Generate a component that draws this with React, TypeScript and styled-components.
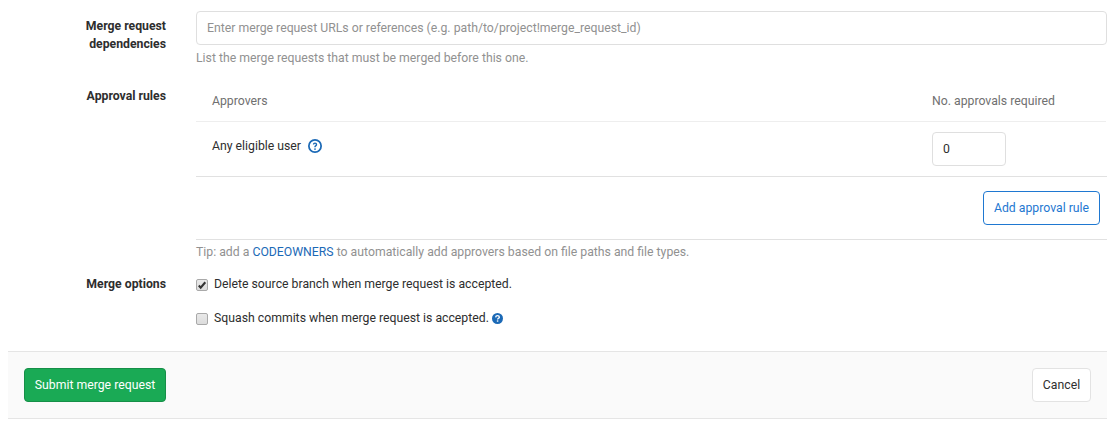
import React from 'react';
import styled, { createGlobalStyle } from 'styled-components';

const GlobalStyle = createGlobalStyle`
  * { box-sizing: border-box; }
  body {
    margin: 0;
    background: #fff;
    color: #2e2e2e;
    font: 12.25px/18px Roboto, "Liberation Sans", sans-serif;
  }
`;

const Page = styled.form`
  width: 1099px;
  margin: 0 0 0 8px;
  padding-top: 11px;
  white-space: nowrap;
`;

const FormRow = styled.div<{ $height: number }>`
  display: grid;
  grid-template-columns: 158px 911px;
  column-gap: 30px;
  height: ${(p) => p.$height}px;
`;

const Label = styled.div<{ $top?: number }>`
  padding-top: ${(p) => p.$top ?? 0}px;
  text-align: right;
  font-weight: 700;
`;

const TextInput = styled.input<{ $width?: string }>`
  display: block;
  width: ${(p) => p.$width ?? '100%'};
  height: 34px;
  padding: 0 10px;
  border: 1px solid #dfdfdf;
  border-radius: 4px;
  background: #fff;
  color: #2e2e2e;
  font: inherit;
  outline: 0;
  &::placeholder { color: #919191; opacity: 1; }
`;

const Help = styled.div<{ $top: number }>`
  margin-top: ${(p) => p.$top}px;
  color: #919191;
`;

const Link = styled.a`
  color: #1b69b6;
  text-decoration: none;
`;

const RuleHeader = styled.div`
  display: grid;
  grid-template-columns: 720px 1fr;
  align-items: center;
  width: 910px;
  height: 42px;
  padding: 0 0 0 16px;
  border-bottom: 1px solid #eee;
  color: #707070;
`;

const RuleRow = styled.div`
  display: grid;
  grid-template-columns: 720px 1fr;
  align-items: start;
  height: 55px;
  padding: 10px 0 0 16px;
  border-bottom: 1px solid #e1e1e1;
`;

const RuleName = styled.div`
  display: flex;
  align-items: center;
  gap: 7px;
  padding-top: 5px;
  svg { display: block; }
`;

const RuleFooter = styled.div`
  display: flex;
  justify-content: flex-end;
  height: 63px;
  padding: 14px 7px 0 0;
  border-bottom: 1px solid #e1e1e1;
`;

const Button = styled.button<{ $kind: 'outline' | 'success' | 'plain'; $width: number }>`
  width: ${(p) => p.$width}px;
  height: 34px;
  padding: 0;
  border: 1px solid ${(p) => ({ outline: '#1f78d1', success: '#168f48', plain: '#e3e3e3' })[p.$kind]};
  border-radius: 4px;
  background: ${(p) => (p.$kind === 'success' ? '#1aaa55' : '#fff')};
  color: ${(p) => ({ outline: '#1f78d1', success: '#fff', plain: '#2e2e2e' })[p.$kind]};
  font: inherit;
`;

const Option = styled.label`
  display: flex;
  align-items: flex-start;
  height: 34px;
`;

const Box = styled.input`
  appearance: none;
  display: block;
  flex: none;
  width: 12px;
  height: 12px;
  margin: 4px 6px 0 0;
  border: 1px solid #a9a9a9;
  border-radius: 2px;
  background: linear-gradient(#e9e9e9, #dcdcdc);
`;

const CheckWrap = styled.span`
  display: grid;
  flex: none;
  > * { grid-area: 1 / 1; }
  svg { margin: 4px 0 0 0; pointer-events: none; }
`;

const HelpDot = styled.svg`
  display: block;
  margin: 4px 0 0 3px;
`;

const Actions = styled.div`
  display: flex;
  justify-content: space-between;
  height: 68px;
  padding: 16px;
  border-top: 1px solid #e5e5e5;
  border-bottom: 1px solid #e5e5e5;
  background: #fafafa;
`;

export default function App() {
  return (
    <>
      <GlobalStyle />
      <Page onSubmit={(e) => e.preventDefault()}>
        <FormRow $height={69}>
          <Label $top={6}>Merge request<br />dependencies</Label>
          <div>
            <TextInput placeholder="Enter merge request URLs or references (e.g. path/to/project!merge_request_id)" />
            <Help $top={4}>List the merge requests that must be merged before this one.</Help>
          </div>
        </FormRow>
        <FormRow $height={195}>
          <Label $top={7}>Approval rules</Label>
          <div>
            <RuleHeader>
              <span>Approvers</span>
              <span>No. approvals required</span>
            </RuleHeader>
            <RuleRow>
              <RuleName>
                Any eligible user
                <svg width="14" height="14" viewBox="0 0 16 16" fill="#1b69b6" aria-label="Help">
                  <path fillRule="evenodd" d="M8 16A8 8 0 1 1 8 0a8 8 0 0 1 0 16zm0-2A6 6 0 1 0 8 2a6 6 0 0 0 0 12z" />
                  <path d="M5.5 6.4a2.5 2.5 0 0 1 5 0c0 1.2-.7 1.7-1.2 2.1-.4.3-.5.4-.5.7v.3H7.2v-.4c0-1 .6-1.5 1.1-1.9.4-.3.6-.4.6-.8a.9.9 0 0 0-1.8 0z" />
                  <circle cx="8" cy="11.5" r="1" />
                </svg>
              </RuleName>
              <TextInput $width="74px" defaultValue="0" />
            </RuleRow>
            <RuleFooter>
              <Button type="button" $kind="outline" $width={117}>Add approval rule</Button>
            </RuleFooter>
            <Help $top={3}>
              Tip: add a <Link>CODEOWNERS</Link> to automatically add approvers based on file paths and file types.
            </Help>
          </div>
        </FormRow>
        <FormRow $height={76}>
          <Label>Merge options</Label>
          <div>
            <Option>
              <CheckWrap>
                <Box type="checkbox" defaultChecked />
                <svg width="12" height="12" viewBox="0 0 12 12">
                  <path d="M2.8 6.5 4.7 8.6 9.3 3.2" fill="none" stroke="#333" strokeWidth="2.1" />
                </svg>
              </CheckWrap>
              Delete source branch when merge request is accepted.
            </Option>
            <Option>
              <Box type="checkbox" />
              Squash commits when merge request is accepted.
              <HelpDot width="11" height="11" viewBox="0 0 12 12" aria-label="Help">
                <circle cx="6" cy="6" r="6" fill="#1b69b6" />
                <path d="M4 4.8C4.1 3.5 4.9 2.9 6 2.9c1.2 0 2 .6 2 1.6 0 1.3-1.8 1.3-1.8 2.6" fill="none" stroke="#fff" strokeWidth="1.5" />
                <path d="M5.3 8h1.6v1.5H5.3z" fill="#fff" />
              </HelpDot>
            </Option>
          </div>
        </FormRow>
        <Actions>
          <Button type="submit" $kind="success" $width={142}>Submit merge request</Button>
          <Button type="button" $kind="plain" $width={59}>Cancel</Button>
        </Actions>
      </Page>
    </>
  );
}
